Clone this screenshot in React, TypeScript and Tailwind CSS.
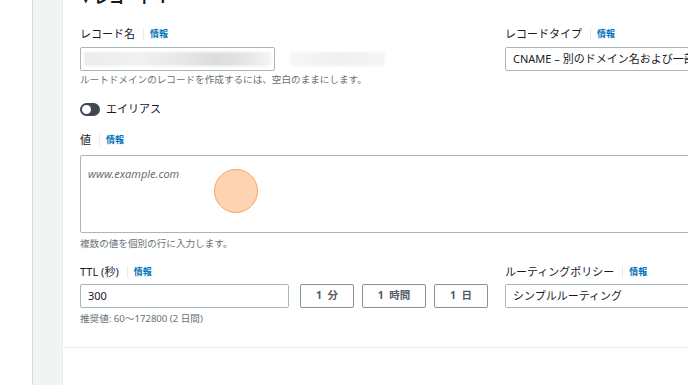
import React from 'react';

const font = { fontFamily: '"Noto Sans", "Noto Sans CJK JP", sans-serif' };

function FieldLabel({ text }: { text: string }) {
  return (
    <div className="flex h-4 items-center text-[11px] leading-4 text-[#16191f]">
      <span>{text}</span>
      <span className="ml-[8px] h-[12px] w-px bg-[#eaeded]" />
      <span className="ml-[6px] text-[9px] font-bold text-[#0073bb]">情報</span>
    </div>
  );
}

function Hint({ text }: { text: string }) {
  return <div className="h-[14px] whitespace-nowrap text-[9.6px] leading-[14px] text-[#687078]">{text}</div>;
}

export default function App() {
  return (
    <div className="flex h-[385px] w-[688px] overflow-hidden bg-white" style={font}>
      <div className="w-[33px] shrink-0 border-r border-[#d5dbdb] bg-white" />
      <div className="w-[30px] shrink-0 border-r border-[#eaeded] bg-[#f2f3f3]" />

      <div className="flex min-w-0 flex-1 flex-col">
        <div className="pl-[17px]">
          {/* 見出し(上端で切れている) */}
          <div className="-mt-[12px] h-[18px] whitespace-nowrap pl-[2px] text-[15px] font-bold leading-[18px] text-[#16191f]">
            ▾ レコード 1
          </div>

          {/* レコード名 / レコードタイプ */}
          <div className="mt-[20px] flex">
            <div className="w-[409px] shrink-0">
              <FieldLabel text="レコード名" />
              <div className="mt-[5px] flex items-center">
                <div className="flex h-[24px] w-[195px] items-center rounded-[2px] border border-[#aab7b8] bg-white px-[3px]">
                  <div className="h-[14px] w-full bg-[linear-gradient(90deg,#ececec_0%,#f1f1f1_30%,#e6e6e6_55%,#dcdcdc_70%,#e4e4e4_85%,#f4f4f4_100%)] blur-[1px]" />
                </div>
                <div className="ml-[15px] h-[14px] w-[95px] bg-[linear-gradient(90deg,#f7f7f7,#f0f0f0_50%,#f5f5f5)] blur-[1px]" />
              </div>
              <div className="mt-[2px]">
                <Hint text="ルートドメインのレコードを作成するには、空白のままにします。" />
              </div>
              <div className="mt-[14px] flex h-4 items-center">
                <div className="flex h-[13px] w-[20px] items-center rounded-full bg-[#414750] pl-[2px]">
                  <div className="h-[9px] w-[9px] rounded-full bg-white" />
                </div>
                <span className="ml-[6px] text-[11px] text-[#16191f]">エイリアス</span>
              </div>
            </div>
            <div className="ml-[16px] w-[240px] shrink-0">
              <FieldLabel text="レコードタイプ" />
              <div className="mt-[5px] flex h-[24px] items-center overflow-hidden whitespace-nowrap rounded-[2px] border border-[#aab7b8] pl-[7px] text-[11px] text-[#16191f]">
                CNAME – 別のドメイン名および一部の AWS リソースにトラフィックをルーティング
              </div>
            </div>
          </div>

          {/* 値 */}
          <div className="mt-[15px]">
            <FieldLabel text="値" />
            <div className="relative mt-[7px] h-[78px] w-[640px] rounded-[2px] border border-[#aab7b8] px-[7px] pt-[4px]">
              <span className="text-[11px] italic text-[#687078]">www.example.com</span>
              <div className="absolute left-[133px] top-[13px] h-[44px] w-[44px] rounded-full border-[1.5px] border-[#f5a55e] bg-[#fdd3b2]" />
            </div>
            <div className="mt-[4px]">
              <Hint text="複数の値を個別の行に入力します。" />
            </div>
          </div>

          {/* TTL / ルーティングポリシー */}
          <div className="mt-[13px] flex">
            <div className="w-[409px] shrink-0">
              <FieldLabel text="TTL (秒)" />
              <div className="mt-[4px] flex items-center">
                <div className="flex h-[24px] w-[209px] items-center rounded-[2px] border border-[#aab7b8] pl-[7px] text-[11px] text-[#16191f]">
                  300
                </div>
                <button className="ml-[11px] h-[24px] w-[54px] rounded-[2px] border border-[#879596] text-[10.5px] font-bold text-[#545b64]">
                  1&nbsp;&nbsp;分
                </button>
                <button className="ml-[8px] h-[24px] w-[64px] rounded-[2px] border border-[#879596] text-[10.5px] font-bold text-[#545b64]">
                  1&nbsp;&nbsp;時間
                </button>
                <button className="ml-[8px] h-[24px] w-[54px] rounded-[2px] border border-[#879596] text-[10.5px] font-bold text-[#545b64]">
                  1&nbsp;&nbsp;日
                </button>
              </div>
              <div className="mt-[4px]">
                <Hint text="推奨値: 60～172800 (2 日間)" />
              </div>
            </div>
            <div className="ml-[16px] w-[240px] shrink-0">
              <FieldLabel text="ルーティングポリシー" />
              <div className="mt-[4px] flex h-[24px] items-center whitespace-nowrap rounded-[2px] border border-[#aab7b8] pl-[7px] text-[11px] text-[#16191f]">
                シンプルルーティング
              </div>
            </div>
          </div>
        </div>

        <div className="mt-[21px] border-t border-[#eaeded]" />
      </div>
    </div>
  );
}
